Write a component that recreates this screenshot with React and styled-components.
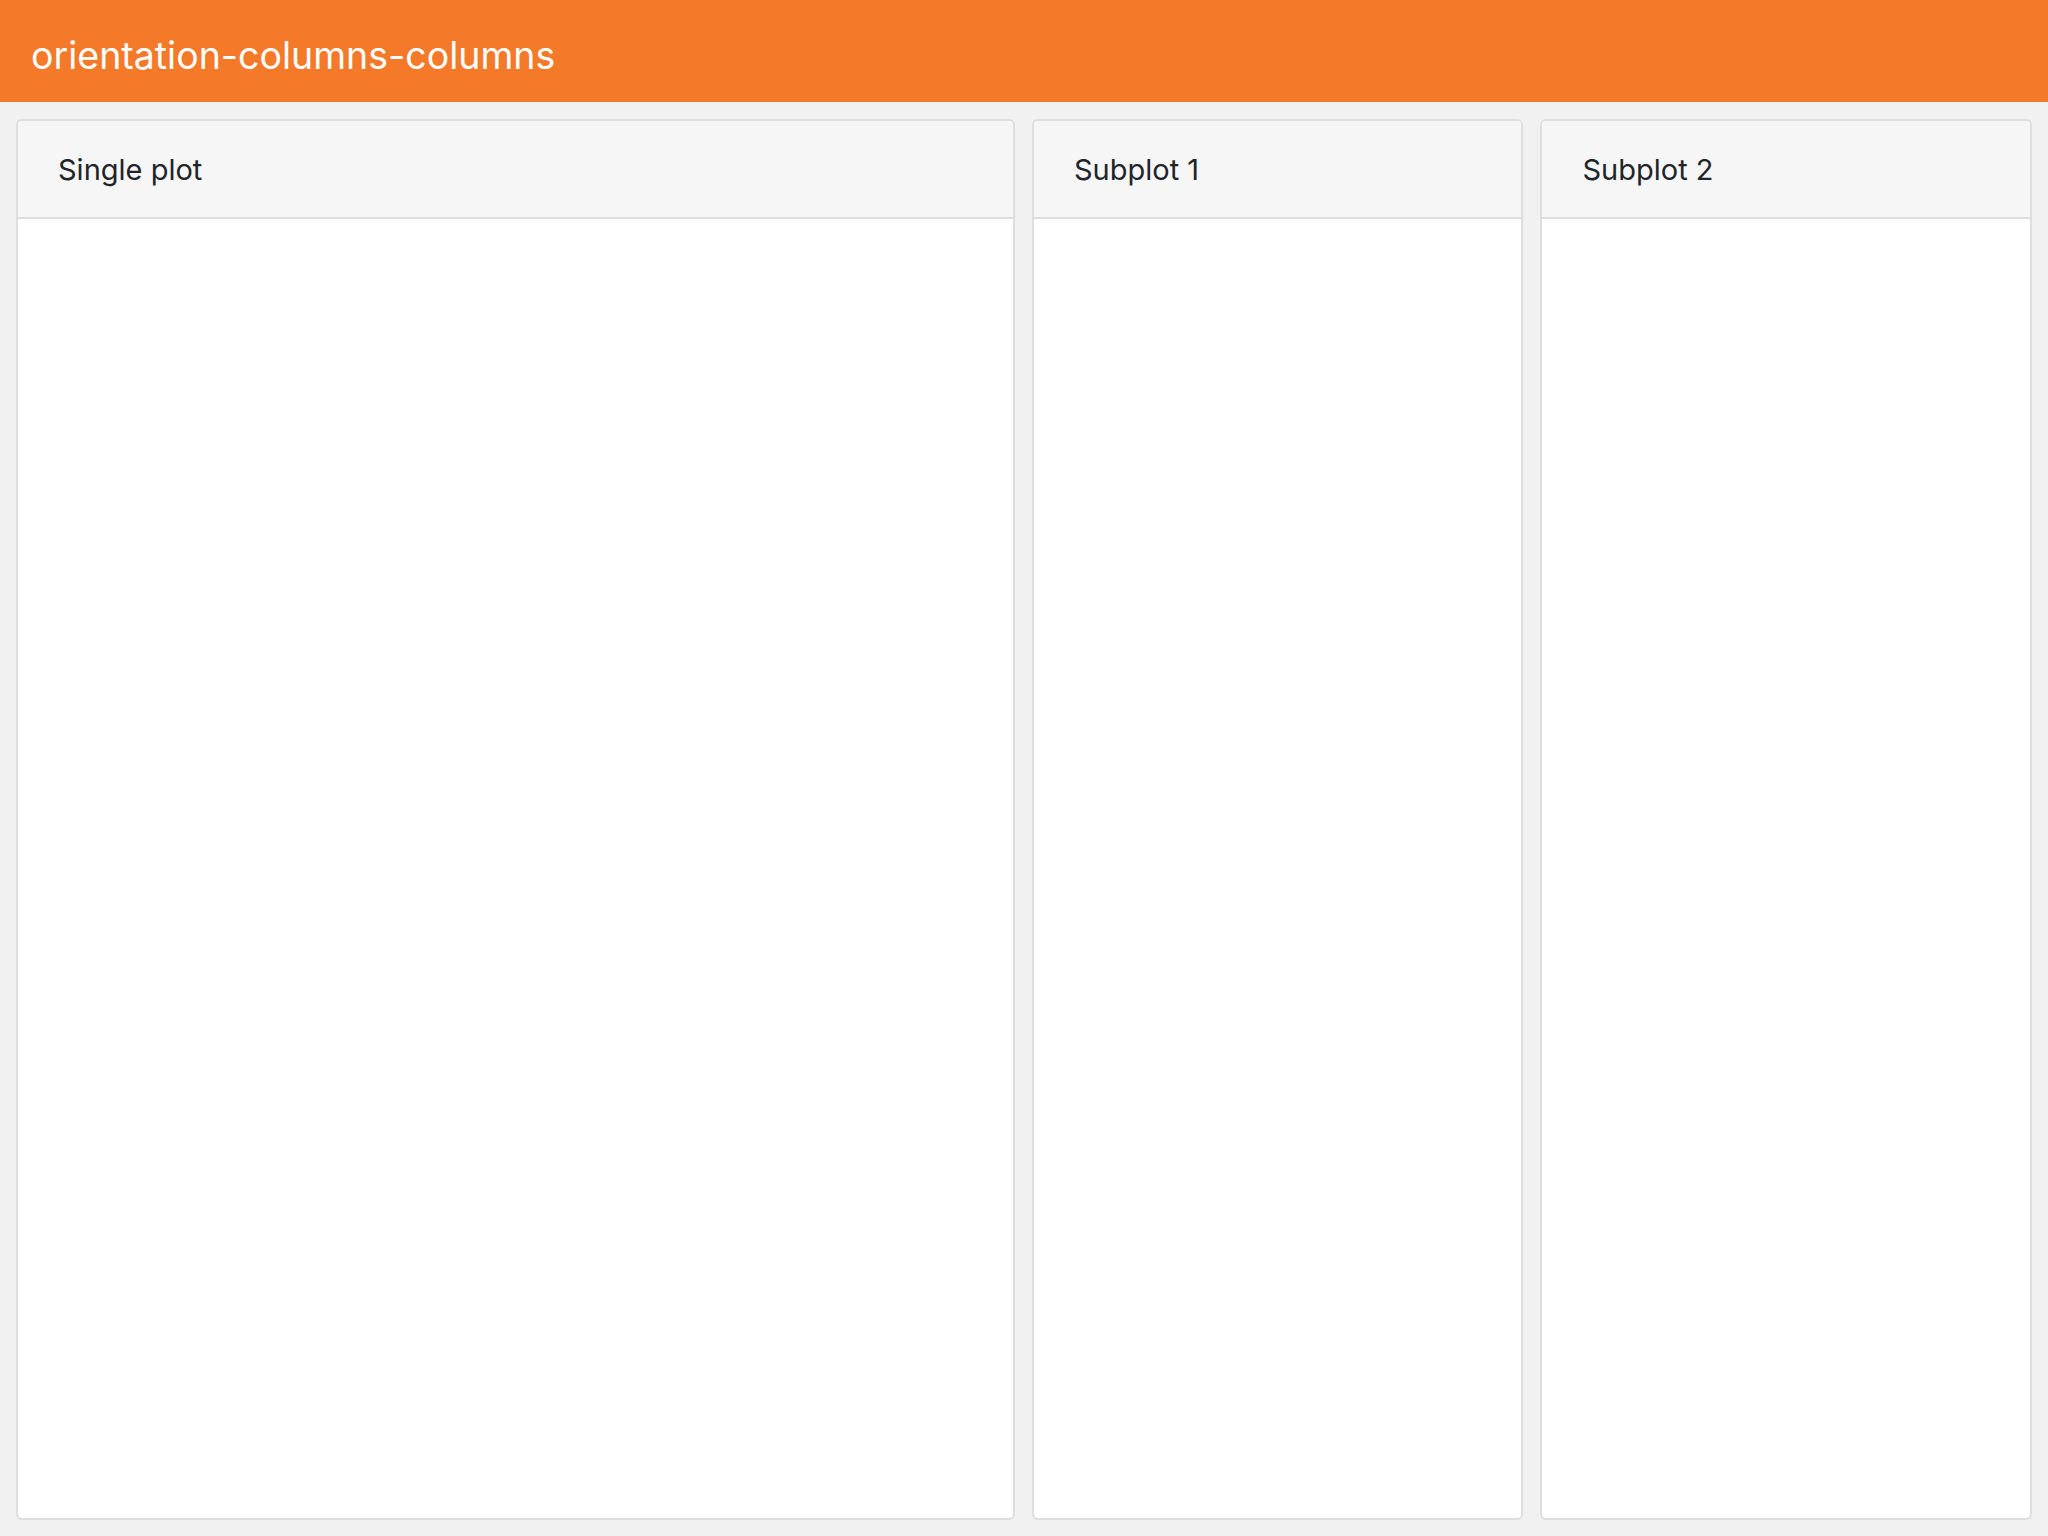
import React from "react";
import styled, { createGlobalStyle } from "styled-components";

const GlobalStyle = createGlobalStyle`
  html, body {
    margin: 0;
    padding: 0;
    height: 100%;
    background: #f1f1f1;
  }
  #root {
    height: 100%;
  }
`;

const Page = styled.div`
  height: 1536px;
  display: flex;
  flex-direction: column;
  font-family: Inter, "Liberation Sans", Arial, sans-serif;
`;

const Navbar = styled.div`
  height: 102px;
  background: #f47929;
  display: flex;
  align-items: center;
  padding: 8px 31px 0;
  box-sizing: border-box;
  flex-shrink: 0;
`;

const Brand = styled.span`
  color: #ffffff;
  font-size: 37.5px;
`;

const Body = styled.div`
  flex: 1;
  display: flex;
  gap: 17px;
  padding: 17px 16px 16px 16px;
  min-height: 0;
`;

const Card = styled.div`
  flex: ${(p) => p.grow} 1 0;
  display: flex;
  flex-direction: column;
  background: #ffffff;
  border: 2px solid #dedede;
  border-radius: 6px;
  overflow: hidden;
`;

const CardHeader = styled.div`
  height: 96px;
  background: #f6f6f6;
  border-bottom: 2px solid #dedede;
  display: flex;
  align-items: center;
  padding: 0 40px;
  color: #212529;
  font-size: 29px;
  flex-shrink: 0;
`;

const CardBody = styled.div`
  flex: 1;
`;

export default function App() {
  return (
    <Page>
      <GlobalStyle />
      <Navbar>
        <Brand>orientation-columns-columns</Brand>
      </Navbar>
      <Body>
        <Card grow={1000}>
          <CardHeader>Single plot</CardHeader>
          <CardBody />
        </Card>
        <Card grow={490}>
          <CardHeader>Subplot 1</CardHeader>
          <CardBody />
        </Card>
        <Card grow={490}>
          <CardHeader>Subplot 2</CardHeader>
          <CardBody />
        </Card>
      </Body>
    </Page>
  );
}
